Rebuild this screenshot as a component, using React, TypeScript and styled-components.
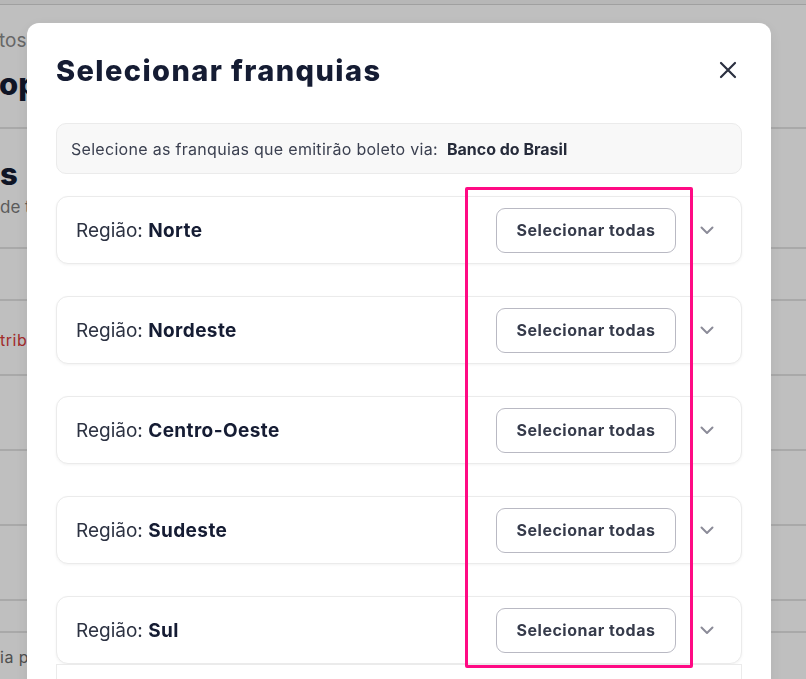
import styled, { createGlobalStyle } from "styled-components";

const GlobalStyle = createGlobalStyle`
  html, body {
    margin: 0;
    padding: 0;
    background: #ffffff;
    font-family: Inter, "Liberation Sans", sans-serif;
  }
  * { box-sizing: border-box; }
`;

const regions = ["Norte", "Nordeste", "Centro-Oeste", "Sudeste", "Sul"];

const ChevronIcon = () => (
  <svg width="14" height="9" viewBox="0 0 14 9" fill="none">
    <path
      d="M1.5 1.5L7 7L12.5 1.5"
      stroke="#8b8b98"
      strokeWidth="2"
      strokeLinecap="round"
      strokeLinejoin="round"
    />
  </svg>
);

const CloseIcon = () => (
  <svg width="18" height="18" viewBox="0 0 18 18" fill="none">
    <path
      d="M2 2L16 16M16 2L2 16"
      stroke="#2b3040"
      strokeWidth="2.2"
      strokeLinecap="round"
    />
  </svg>
);

const App = () => {
  return (
    <>
      <GlobalStyle />
      {/* page behind the modal, only its left edge shows */}
      <PageStyled>
        <TopBarStyled />
        <PageHeaderStyled>
          <CrumbStyled>tos</CrumbStyled>
          <PageTitleStyled>op</PageTitleStyled>
        </PageHeaderStyled>
        <SectionStyled>
          <SectionTitleStyled>s pa</SectionTitleStyled>
          <SectionTextStyled>de tem</SectionTextStyled>
        </SectionStyled>
        <PageRowStyled $height={52} />
        <PageRowStyled $height={75}>
          <RedTextStyled>tribui</RedTextStyled>
        </PageRowStyled>
        <PageRowStyled $height={75} />
        <PageRowStyled $height={75} />
        <PageRowStyled $height={75} />
        <PageRowStyled $height={32} />
        <PageRowStyled $height={60}>
          <FootTextStyled>ia pa</FootTextStyled>
        </PageRowStyled>
      </PageStyled>

      <OverlayStyled>
        <ModalStyled>
          <ModalHeaderStyled>
            <ModalTitleStyled>Selecionar franquias</ModalTitleStyled>
            <CloseButtonStyled aria-label="Fechar">
              <CloseIcon />
            </CloseButtonStyled>
          </ModalHeaderStyled>

          <InfoBoxStyled>
            Selecione as franquias que emitirão boleto via:
            <strong>Banco do Brasil</strong>
          </InfoBoxStyled>

          <RegionListStyled>
            {regions.map((region) => (
              <RegionCardStyled key={region}>
                <RegionLabelStyled>
                  Região: <b>{region}</b>
                </RegionLabelStyled>
                <RegionActionsStyled>
                  <SelectAllButtonStyled>Selecionar todas</SelectAllButtonStyled>
                  <ChevronIcon />
                </RegionActionsStyled>
              </RegionCardStyled>
            ))}
            <RegionCardStyled $cut />
          </RegionListStyled>

          <HighlightStyled />
        </ModalStyled>
      </OverlayStyled>
    </>
  );
};

const PageStyled = styled.div`
  width: 806px;
  height: 679px;
  overflow: hidden;
  display: flex;
  flex-direction: column;
  background: #ffffff;
`;

const TopBarStyled = styled.div`
  height: 5px;
  flex-shrink: 0;
  border-bottom: 1px solid #d6d6d6;
  background: #f4f4f4;
`;

const PageHeaderStyled = styled.div`
  height: 124px;
  flex-shrink: 0;
  border-bottom: 2px solid #e2e2e2;
  padding-top: 25px;
`;

const CrumbStyled = styled.div`
  font-size: 19px;
  color: #8a8a8a;
  line-height: 22px;
  margin-left: -1px;
`;

const PageTitleStyled = styled.div`
  font-size: 31px;
  font-weight: 800;
  color: #151c33;
  margin-top: 14px;
  line-height: 36px;
  margin-left: -1px;
`;

const SectionStyled = styled.div`
  height: 120px;
  flex-shrink: 0;
  border-bottom: 2px solid #e2e2e2;
  padding-top: 27px;
`;

const SectionTitleStyled = styled.div`
  font-size: 31px;
  font-weight: 800;
  color: #151c33;
  line-height: 36px;
  letter-spacing: 3px;
`;

const SectionTextStyled = styled.div`
  font-size: 17px;
  color: #7a7a7a;
  margin-top: 5px;
  line-height: 20px;
`;

const PageRowStyled = styled.div<{ $height: number }>`
  height: ${({ $height }) => $height}px;
  flex-shrink: 0;
  border-bottom: 2px solid #e2e2e2;
  display: flex;
  align-items: flex-start;
`;

const RedTextStyled = styled.div`
  font-size: 16px;
  color: #d93a3a;
  margin-top: 29px;
  letter-spacing: 0.5px;
`;

const FootTextStyled = styled.div`
  font-size: 16px;
  color: #6a6a6a;
  margin-top: 14px;
  letter-spacing: 0.5px;
`;

const OverlayStyled = styled.div`
  position: fixed;
  inset: 0;
  background: rgba(0, 0, 0, 0.25);
  display: flex;
  justify-content: center;
  align-items: flex-start;
  padding-top: 23px;
  overflow: hidden;
`;

const ModalStyled = styled.div`
  position: relative;
  width: 744px;
  margin-right: 8px;
  background: #ffffff;
  border-radius: 12px;
  padding: 27px 29px 40px;
  display: flex;
  flex-direction: column;
  box-shadow: 0 4px 16px rgba(0, 0, 0, 0.08);
`;

const ModalHeaderStyled = styled.div`
  display: flex;
  align-items: center;
  justify-content: space-between;
  height: 40px;
  margin-bottom: 33px;
`;

const ModalTitleStyled = styled.h2`
  margin: 0;
  font-size: 29px;
  font-weight: 800;
  letter-spacing: 1.4px;
  color: #151c33;
`;

const CloseButtonStyled = styled.button`
  border: none;
  background: none;
  padding: 0;
  margin-right: 5px;
  display: flex;
  cursor: pointer;
`;

const InfoBoxStyled = styled.div`
  height: 51px;
  display: flex;
  align-items: center;
  gap: 9px;
  padding: 0 14px;
  background: #f8f8f8;
  border: 1px solid #ebebeb;
  border-radius: 10px;
  font-size: 16px;
  letter-spacing: 0.3px;
  color: #3b4050;

  strong {
    font-weight: 700;
    letter-spacing: 0;
    color: #262b3a;
  }
`;

const RegionListStyled = styled.div`
  margin-top: 22px;
  display: flex;
  flex-direction: column;
  gap: 32px;
`;

const RegionCardStyled = styled.div<{ $cut?: boolean }>`
  height: 68px;
  display: flex;
  align-items: center;
  justify-content: space-between;
  padding: 0 27px 0 19px;
  border: 1px solid #ebebeb;
  border-radius: 12px;
  box-shadow: 0 1px 3px rgba(0, 0, 0, 0.05);
  background: #ffffff;
  ${({ $cut }) => ($cut ? "margin-top: -32px; border-radius: 0; box-shadow: none;" : "")}
`;

const RegionLabelStyled = styled.div`
  font-size: 19px;
  color: #2c3242;

  b {
    font-weight: 700;
    letter-spacing: 0.4px;
    color: #151c33;
  }
`;

const RegionActionsStyled = styled.div`
  display: flex;
  align-items: center;
  gap: 24px;
`;

const SelectAllButtonStyled = styled.button`
  height: 45px;
  width: 180px;
  border: 1px solid #b9b9c3;
  border-radius: 9px;
  background: #ffffff;
  font-family: Inter, "Liberation Sans", sans-serif;
  font-size: 16px;
  font-weight: 700;
  letter-spacing: 0.5px;
  color: #363b4b;
  cursor: pointer;
`;

const HighlightStyled = styled.div`
  position: absolute;
  left: 438px;
  top: 164px;
  width: 228px;
  height: 481px;
  border: 3px solid #ff0a84;
  border-radius: 2px;
  pointer-events: none;
`;

export default App;
